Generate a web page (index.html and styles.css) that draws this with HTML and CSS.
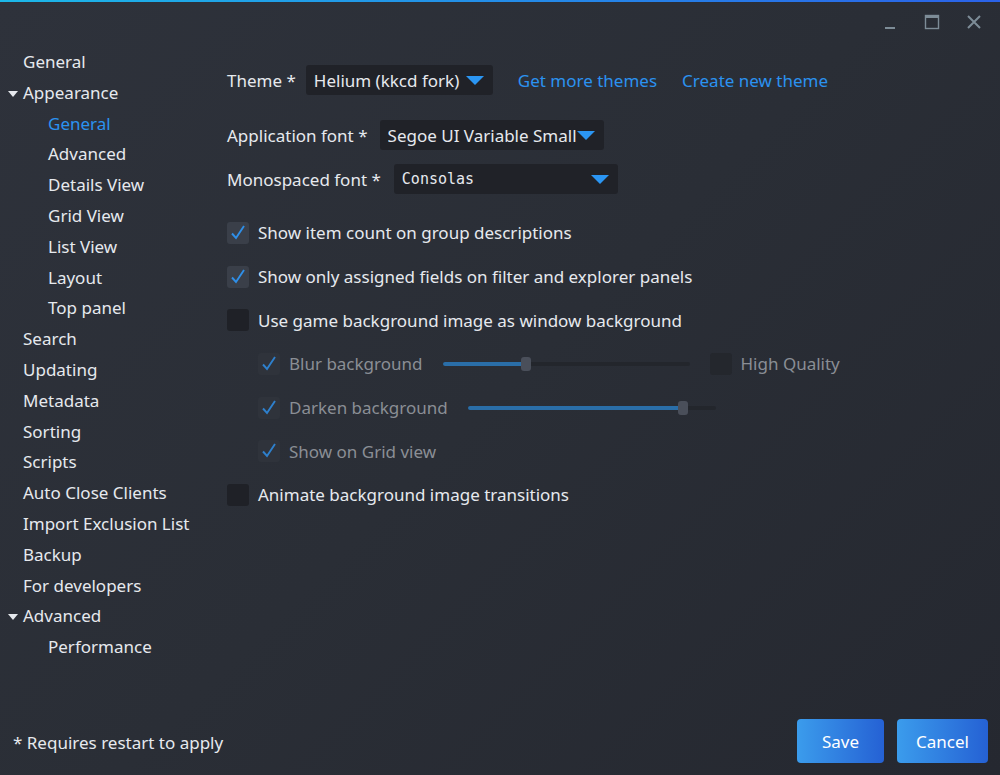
FILE: index.html
```html
<!DOCTYPE html>
<html>
<head>
<meta charset="utf-8">
<link rel="stylesheet" href="styles.css">
</head>
<body>
<div class="window">
  <div class="titlebar">
    <span class="tb-btn tb-min"><svg width="12" height="12" viewBox="0 0 12 12"><rect x="1" y="9" width="10" height="2" fill="#7d8c97"/></svg></span>
    <span class="tb-btn tb-max"><svg width="16" height="16" viewBox="0 0 16 16"><rect x="1.5" y="1.5" width="13" height="13" fill="none" stroke="#7d8c97" stroke-width="1.4"/><rect x="1" y="1" width="14" height="3" fill="#7d8c97"/></svg></span>
    <span class="tb-btn tb-close"><svg width="16" height="16" viewBox="0 0 16 16"><path d="M2 2 L14 14 M14 2 L2 14" stroke="#7d8c97" stroke-width="2"/></svg></span>
  </div>
  <div class="body">
    <nav class="sidebar">
      <div class="nav-item top">General</div>
      <div class="nav-item top"><span class="caret"></span>Appearance</div>
      <div class="nav-item sub active">General</div>
      <div class="nav-item sub">Advanced</div>
      <div class="nav-item sub">Details View</div>
      <div class="nav-item sub">Grid View</div>
      <div class="nav-item sub">List View</div>
      <div class="nav-item sub">Layout</div>
      <div class="nav-item sub">Top panel</div>
      <div class="nav-item top">Search</div>
      <div class="nav-item top">Updating</div>
      <div class="nav-item top">Metadata</div>
      <div class="nav-item top">Sorting</div>
      <div class="nav-item top">Scripts</div>
      <div class="nav-item top">Auto Close Clients</div>
      <div class="nav-item top">Import Exclusion List</div>
      <div class="nav-item top">Backup</div>
      <div class="nav-item top">For developers</div>
      <div class="nav-item top"><span class="caret"></span>Advanced</div>
      <div class="nav-item sub">Performance</div>
    </nav>
    <main class="content">
      <div class="row theme-row">
        <span class="label">Theme *</span>
        <div class="select sel-theme"><span>Helium (kkcd fork)</span><span class="arrow"></span></div>
        <a class="link">Get more themes</a>
        <a class="link">Create new theme</a>
      </div>
      <div class="row font-row">
        <span class="label">Application font *</span>
        <div class="select sel-app"><span>Segoe UI Variable Small</span><span class="arrow"></span></div>
      </div>
      <div class="row mono-row">
        <span class="label">Monospaced font *</span>
        <div class="select sel-mono"><span class="mono">Consolas</span><span class="arrow"></span></div>
      </div>
      <div class="checks">
        <div class="check"><span class="box on"><svg viewBox="0 0 22 22"><path d="M5 11.5 L9 16 L17 4" fill="none" stroke="#2f8fe8" stroke-width="1.9"/></svg></span>Show item count on group descriptions</div>
        <div class="check"><span class="box on"><svg viewBox="0 0 22 22"><path d="M5 11.5 L9 16 L17 4" fill="none" stroke="#2f8fe8" stroke-width="1.9"/></svg></span>Show only assigned fields on filter and explorer panels</div>
        <div class="check"><span class="box off"></span>Use game background image as window background</div>
        <div class="check sub dim">
          <span class="box on"><svg viewBox="0 0 22 22"><path d="M5 11.5 L9 16 L17 4" fill="none" stroke="#2f8fe8" stroke-width="1.9"/></svg></span>
          <span class="dim-label">Blur background</span>
          <div class="slider slider-blur"><div class="fill" style="width:83px"></div><div class="thumb"></div></div>
          <span class="box off hq"></span><span class="dim-label">High Quality</span>
        </div>
        <div class="check sub dim">
          <span class="box on"><svg viewBox="0 0 22 22"><path d="M5 11.5 L9 16 L17 4" fill="none" stroke="#2f8fe8" stroke-width="1.9"/></svg></span>
          <span class="dim-label">Darken background</span>
          <div class="slider slider-dark"><div class="fill" style="width:215px"></div><div class="thumb"></div></div>
        </div>
        <div class="check sub dim">
          <span class="box on"><svg viewBox="0 0 22 22"><path d="M5 11.5 L9 16 L17 4" fill="none" stroke="#2f8fe8" stroke-width="1.9"/></svg></span>
          <span class="dim-label">Show on Grid view</span>
        </div>
        <div class="check"><span class="box off"></span>Animate background image transitions</div>
      </div>
    </main>
  </div>
  <footer class="footer">
    <span class="note">* Requires restart to apply</span>
    <div class="buttons">
      <button class="btn btn-save">Save</button>
      <button class="btn btn-cancel">Cancel</button>
    </div>
  </footer>
</div>
</body>
</html>
```

FILE: styles.css
```css
* { box-sizing: border-box; }
html, body { margin: 0; padding: 0; }
body {
  width: 1000px;
  height: 775px;
  overflow: hidden;
  font-family: "Noto Sans", "Open Sans", sans-serif;
  font-size: 17px;
  color: #e6e9ee;
}
.window {
  width: 1000px;
  height: 775px;
  display: flex;
  flex-direction: column;
  background: linear-gradient(135deg, #2e323b 0%, #2a2e36 50%, #252830 100%);
  border-top: 2px solid transparent;
  border-image: linear-gradient(90deg, #1cb8e8, #2b62e8) 1;
  border-left: 0; border-right: 0; border-bottom: 0;
  position: relative;
}
.titlebar {
  height: 40px;
  display: flex;
  justify-content: flex-end;
  align-items: center;
  padding-right: 16px;
  gap: 22px;
}
.tb-btn { display: flex; align-items: center; justify-content: center; width: 20px; height: 20px; }
.tb-min { margin-top: 4px; }
.body { flex: 1; display: flex; }
.sidebar {
  width: 227px;
  padding-top: 5px;
  display: flex;
  flex-direction: column;
}
.nav-item {
  height: 30.8px;
  line-height: 30.8px;
  white-space: nowrap;
  position: relative;
}
.nav-item.top { padding-left: 23px; }
.nav-item.sub { padding-left: 48px; }
.nav-item.active { color: #2b92f0; }
.caret {
  position: absolute;
  left: 8px;
  top: 13px;
  width: 0; height: 0;
  border-left: 5px solid transparent;
  border-right: 5px solid transparent;
  border-top: 6px solid #e6e9ee;
}
.content { flex: 1; padding-top: 23px; }
.row { display: flex; align-items: center; }
.label { white-space: nowrap; }
.theme-row { height: 30px; }
.theme-row .label { margin-right: 10px; }
.select {
  height: 30px;
  background: #202228;
  border-radius: 3px;
  display: flex;
  align-items: center;
  padding-left: 8px;
  position: relative;
  white-space: nowrap;
}
.arrow {
  width: 0; height: 0;
  border-left: 9px solid transparent;
  border-right: 9px solid transparent;
  border-top: 9px solid #2b96f3;
  position: absolute;
  right: 9px;
  top: 11px;
}
.sel-theme { width: 187px; }
.sel-app { width: 224px; }
.sel-app span:first-child { width: 188px; overflow: hidden; }
.sel-mono { width: 224px; }
.mono { font-family: "DejaVu Sans Mono", "Liberation Mono", monospace; font-size: 15px; }
.link { color: #2b92f0; margin-left: 25px; text-decoration: none; }
.font-row { margin-top: 25px; }
.font-row .label { margin-right: 12px; }
.mono-row { margin-top: 14px; }
.mono-row .label { margin-right: 13px; }
.checks { margin-top: 17px; display: flex; flex-direction: column; }
.check {
  height: 43.7px;
  display: flex;
  align-items: center;
  white-space: nowrap;
}
.box {
  width: 22px;
  height: 22px;
  border-radius: 3px;
  margin-right: 9px;
  flex: none;
  display: flex;
}
.box svg { width: 22px; height: 22px; }
.box.on { background: #3a3f49; }
.box.off { background: #1f2127; }
.check.sub { padding-left: 31px; }
.check.dim .box.on { background: #30343c; opacity: 0.85; }
.dim-label { color: #8a8e95; }
.slider {
  position: relative;
  height: 4px;
  background: #23262c;
  border-radius: 2px;
}
.slider .fill {
  height: 4px;
  background: #2a6ea8;
  border-radius: 2px;
}
.slider .thumb {
  position: absolute;
  top: -5px;
  width: 10px;
  height: 14px;
  border-radius: 3px;
  background: #4a4f5a;
}
.slider-blur { width: 247px; margin-left: 20px; }
.slider-blur .thumb { left: 78px; }
.slider-dark { width: 248px; margin-left: 20px; }
.slider-dark .thumb { left: 210px; }
.box.hq { margin-left: 20px; background: #24272d; }
.footer {
  height: 68px;
  display: flex;
  align-items: center;
  justify-content: space-between;
  padding: 0 12px 0 13px;
}
.note { margin-top: 2px; }
.buttons { display: flex; gap: 13px; }
.btn {
  height: 44px;
  border: 0;
  border-radius: 4px;
  color: #fff;
  font-family: inherit;
  font-size: 17px;
  background: linear-gradient(90deg, #3b9cec, #2561d4);
}
.btn-save { width: 87px; }
.btn-cancel { width: 91px; }
```
